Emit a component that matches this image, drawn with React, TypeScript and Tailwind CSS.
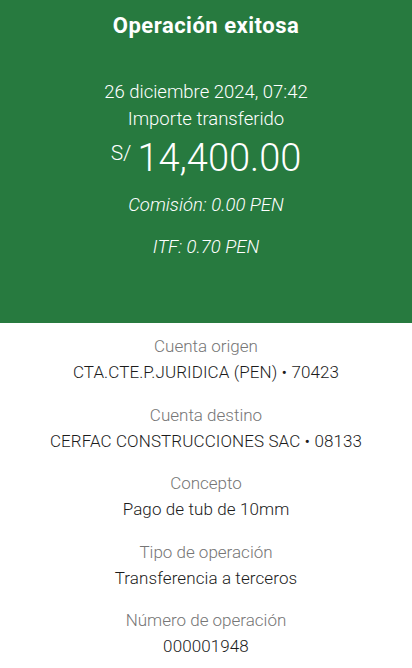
const details = [
  { label: "Cuenta origen", value: "CTA.CTE.P.JURIDICA (PEN) • 70423" },
  { label: "Cuenta destino", value: "CERFAC CONSTRUCCIONES SAC • 08133" },
  { label: "Concepto", value: "Pago de tub de 10mm" },
  { label: "Tipo de operación", value: "Transferencia a terceros" },
  { label: "Número de operación", value: "000001948" },
];

export default function App() {
  return (
    <div className="w-[412px] h-[668px] overflow-hidden bg-white font-['Roboto',sans-serif]">
      {/* Success header */}
      <section className="h-[323px] bg-[#277a3f] text-white flex flex-col items-center">
        <h1 className="mt-[10px] text-[22px] font-bold tracking-[0.5px] leading-[32px]">Operación exitosa</h1>
        <p className="mt-[36px] text-[18.5px] font-light leading-[28px]">26 diciembre 2024, 07:42</p>
        <p className="text-[18.5px] font-light leading-[26px]">Importe transferido</p>
        <div className="flex items-start mt-[2px]">
          <span className="text-[21px] font-light leading-[24px] mt-[7px] mr-[6px]">S/</span>
          <span className="text-[38px] font-light leading-[48px]">14,400.00</span>
        </div>
        <p className="mt-[10px] text-[18.5px] font-light italic leading-[26px]">Comisión: 0.00 PEN</p>
        <p className="mt-[16px] text-[18.5px] font-light italic leading-[26px]">ITF: 0.70 PEN</p>
      </section>

      {/* Details */}
      <section className="flex flex-col items-center pt-[10px] gap-[16.5px]">
        {details.map((d) => (
          <div key={d.label} className="flex flex-col items-center">
            <span className="text-[17px] font-light text-[#767676] leading-[26px]">{d.label}</span>
            <span className="text-[17px] font-light text-[#1c1c1c] leading-[26px] tracking-[0.1px]">{d.value}</span>
          </div>
        ))}
      </section>
    </div>
  );
}
